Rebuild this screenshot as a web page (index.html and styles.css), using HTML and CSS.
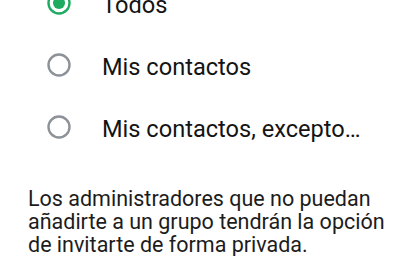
FILE: index.html
```html
<!DOCTYPE html>
<html lang="es">
<head>
  <meta charset="UTF-8">
  <meta name="viewport" content="width=device-width, initial-scale=1.0">
  <title>Grupos</title>
  <link rel="stylesheet" href="styles.css">
</head>
<body>

  <!-- Opciones de privacidad -->
  <div class="options">
    <div class="option">
      <svg class="radio" width="24" height="24" viewBox="0 0 24 24">
        <circle cx="12" cy="12" r="10.5" fill="none" stroke="#1daa61" stroke-width="2.4"/>
        <circle cx="12" cy="12" r="6" fill="#1daa61"/>
      </svg>
      <span class="label">Todos</span>
    </div>
    <div class="option">
      <svg class="radio" width="24" height="24" viewBox="0 0 24 24">
        <circle cx="12" cy="12" r="10.5" fill="none" stroke="#8c9297" stroke-width="2.4"/>
      </svg>
      <span class="label">Mis contactos</span>
    </div>
    <div class="option">
      <svg class="radio" width="24" height="24" viewBox="0 0 24 24">
        <circle cx="12" cy="12" r="10.5" fill="none" stroke="#8c9297" stroke-width="2.4"/>
      </svg>
      <span class="label">Mis contactos, excepto…</span>
    </div>
  </div>

  <p class="note">Los administradores que no puedan añadirte a un grupo tendrán la opción de invitarte de forma privada.</p>

</body>
</html>
```

FILE: styles.css
```css
body {
  font-family: Roboto, 'Noto Sans', sans-serif;
  background-color: #fff;
  color: #1b1b1b;
  margin: 0;
  padding: 0;
  overflow: hidden;
}

.options {
  margin-top: -28px;
}

.option {
  display: flex;
  align-items: center;
  height: 62px;
  padding-left: 47px;
}

.radio {
  flex-shrink: 0;
  display: block;
}

.label {
  font-size: 23.6px;
  margin-left: 31px;
  padding-top: 4px;
  color: #141414;
}

.note {
  margin: 29px 0 0 28px;
  padding-right: 20px;
  font-size: 21.5px;
  line-height: 23px;
  color: #1c1c1c;
}
```
